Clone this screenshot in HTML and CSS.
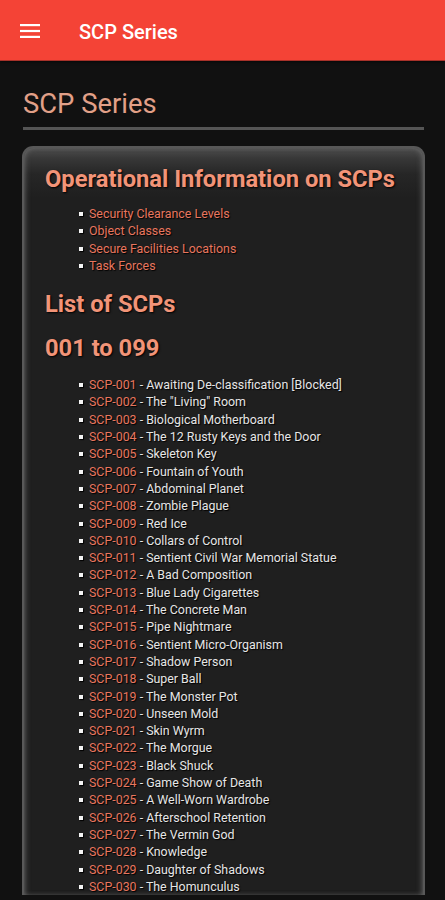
FILE: index.html
```html
<!DOCTYPE html>
<html>
<head>
<meta charset="utf-8">
<link rel="stylesheet" href="styles.css">
</head>
<body>
<header class="appbar">
  <svg class="menu" width="20" height="14" viewBox="0 0 20 14"><rect x="0" y="0" width="20" height="2.2" fill="#fff"/><rect x="0" y="5.9" width="20" height="2.2" fill="#fff"/><rect x="0" y="11.8" width="20" height="2.2" fill="#fff"/></svg>
  <span class="appbar-title">SCP Series</span>
</header>
<main class="content">
  <h1 class="page-title">SCP Series</h1>
  <section class="card">
    <h2 class="card-heading">Operational Information on SCPs</h2>
    <ul class="list">
      <li><a class="link">Security Clearance Levels</a></li>
      <li><a class="link">Object Classes</a></li>
      <li><a class="link">Secure Facilities Locations</a></li>
      <li><a class="link">Task Forces</a></li>
    </ul>
    <h2 class="card-heading">List of SCPs</h2>
    <h2 class="card-heading">001 to 099</h2>
    <ul class="list scp-list">
      <li><a class="link">SCP-001</a> - Awaiting De-classification [Blocked]</li>
      <li><a class="link">SCP-002</a> - The "Living" Room</li>
      <li><a class="link">SCP-003</a> - Biological Motherboard</li>
      <li><a class="link">SCP-004</a> - The 12 Rusty Keys and the Door</li>
      <li><a class="link">SCP-005</a> - Skeleton Key</li>
      <li><a class="link">SCP-006</a> - Fountain of Youth</li>
      <li><a class="link">SCP-007</a> - Abdominal Planet</li>
      <li><a class="link">SCP-008</a> - Zombie Plague</li>
      <li><a class="link">SCP-009</a> - Red Ice</li>
      <li><a class="link">SCP-010</a> - Collars of Control</li>
      <li><a class="link">SCP-011</a> - Sentient Civil War Memorial Statue</li>
      <li><a class="link">SCP-012</a> - A Bad Composition</li>
      <li><a class="link">SCP-013</a> - Blue Lady Cigarettes</li>
      <li><a class="link">SCP-014</a> - The Concrete Man</li>
      <li><a class="link">SCP-015</a> - Pipe Nightmare</li>
      <li><a class="link">SCP-016</a> - Sentient Micro-Organism</li>
      <li><a class="link">SCP-017</a> - Shadow Person</li>
      <li><a class="link">SCP-018</a> - Super Ball</li>
      <li><a class="link">SCP-019</a> - The Monster Pot</li>
      <li><a class="link">SCP-020</a> - Unseen Mold</li>
      <li><a class="link">SCP-021</a> - Skin Wyrm</li>
      <li><a class="link">SCP-022</a> - The Morgue</li>
      <li><a class="link">SCP-023</a> - Black Shuck</li>
      <li><a class="link">SCP-024</a> - Game Show of Death</li>
      <li><a class="link">SCP-025</a> - A Well-Worn Wardrobe</li>
      <li><a class="link">SCP-026</a> - Afterschool Retention</li>
      <li><a class="link">SCP-027</a> - The Vermin God</li>
      <li><a class="link">SCP-028</a> - Knowledge</li>
      <li><a class="link">SCP-029</a> - Daughter of Shadows</li>
      <li><a class="link">SCP-030</a> - The Homunculus</li>
    </ul>
  </section>
</main>
</body>
</html>
```
FILE: styles.css
```css
html, body {
  margin: 0;
  padding: 0;
  background: #111111;
  font-family: Roboto, "Noto Sans", sans-serif;
  overflow: hidden;
  height: 900px;
}
.appbar {
  height: 61px;
  background: #f44336;
  display: flex;
  align-items: center;
  padding-left: 20px;
  box-sizing: border-box;
  border-bottom: 1px solid #a8322a;
  box-shadow: 0 1px 3px rgba(0,0,0,0.6);
}
.menu {
  display: block;
  margin-top: 2px;
}
.appbar-title {
  color: #fff;
  font-size: 20px;
  font-weight: 500;
  margin-left: 39px;
  margin-top: 4px;
}
.content {
  padding: 0 21px 0 23px;
}
.page-title {
  margin: 28px 0 0;
  font-size: 27.4px;
  font-weight: 400;
  color: #e2a088;
  line-height: 30px;
  padding-bottom: 8px;
  border-bottom: 3px solid #555;
}
.card {
  margin: 16px -1px 0 -1px;
  border: 2px solid #585858;
  border-bottom: none;
  border-radius: 11px 11px 0 0;
  background: linear-gradient(#4e4e4e 0, #383838 10px, #262626 26px, #1f1f1f 50px);
  box-shadow: inset 3px 0 6px -3px #777, inset -3px 0 6px -3px #777;
  padding: 15px 20px 0 21px;
}
.card-heading {
  margin: 0;
  color: #f29478;
  font-size: 23.7px;
  font-weight: 700;
  line-height: 32px;
  text-shadow: 1px 1px 2px #000;
}
.card-heading + .card-heading {
  margin-top: 12px;
}
.list {
  list-style: none;
  color: #fff;
  margin: 10px 0 14px;
  padding-left: 44px;
  font-size: 12.4px;
  line-height: 17.3px;
}
.list li::before {
  content: "";
  display: inline-block;
  width: 4px;
  height: 4px;
  background: #f4f4f4;
  margin-left: -10px;
  margin-right: 6px;
  vertical-align: 2px;
  box-shadow: 1px 1px 1px #000;
}
.link {
  color: #e8765e;
  text-shadow: 1px 1px 1px #000;
}
.scp-list {
  color: #e6e6e6;
  margin-top: 12px;
  text-shadow: 1px 1px 1px #000;
}
```
